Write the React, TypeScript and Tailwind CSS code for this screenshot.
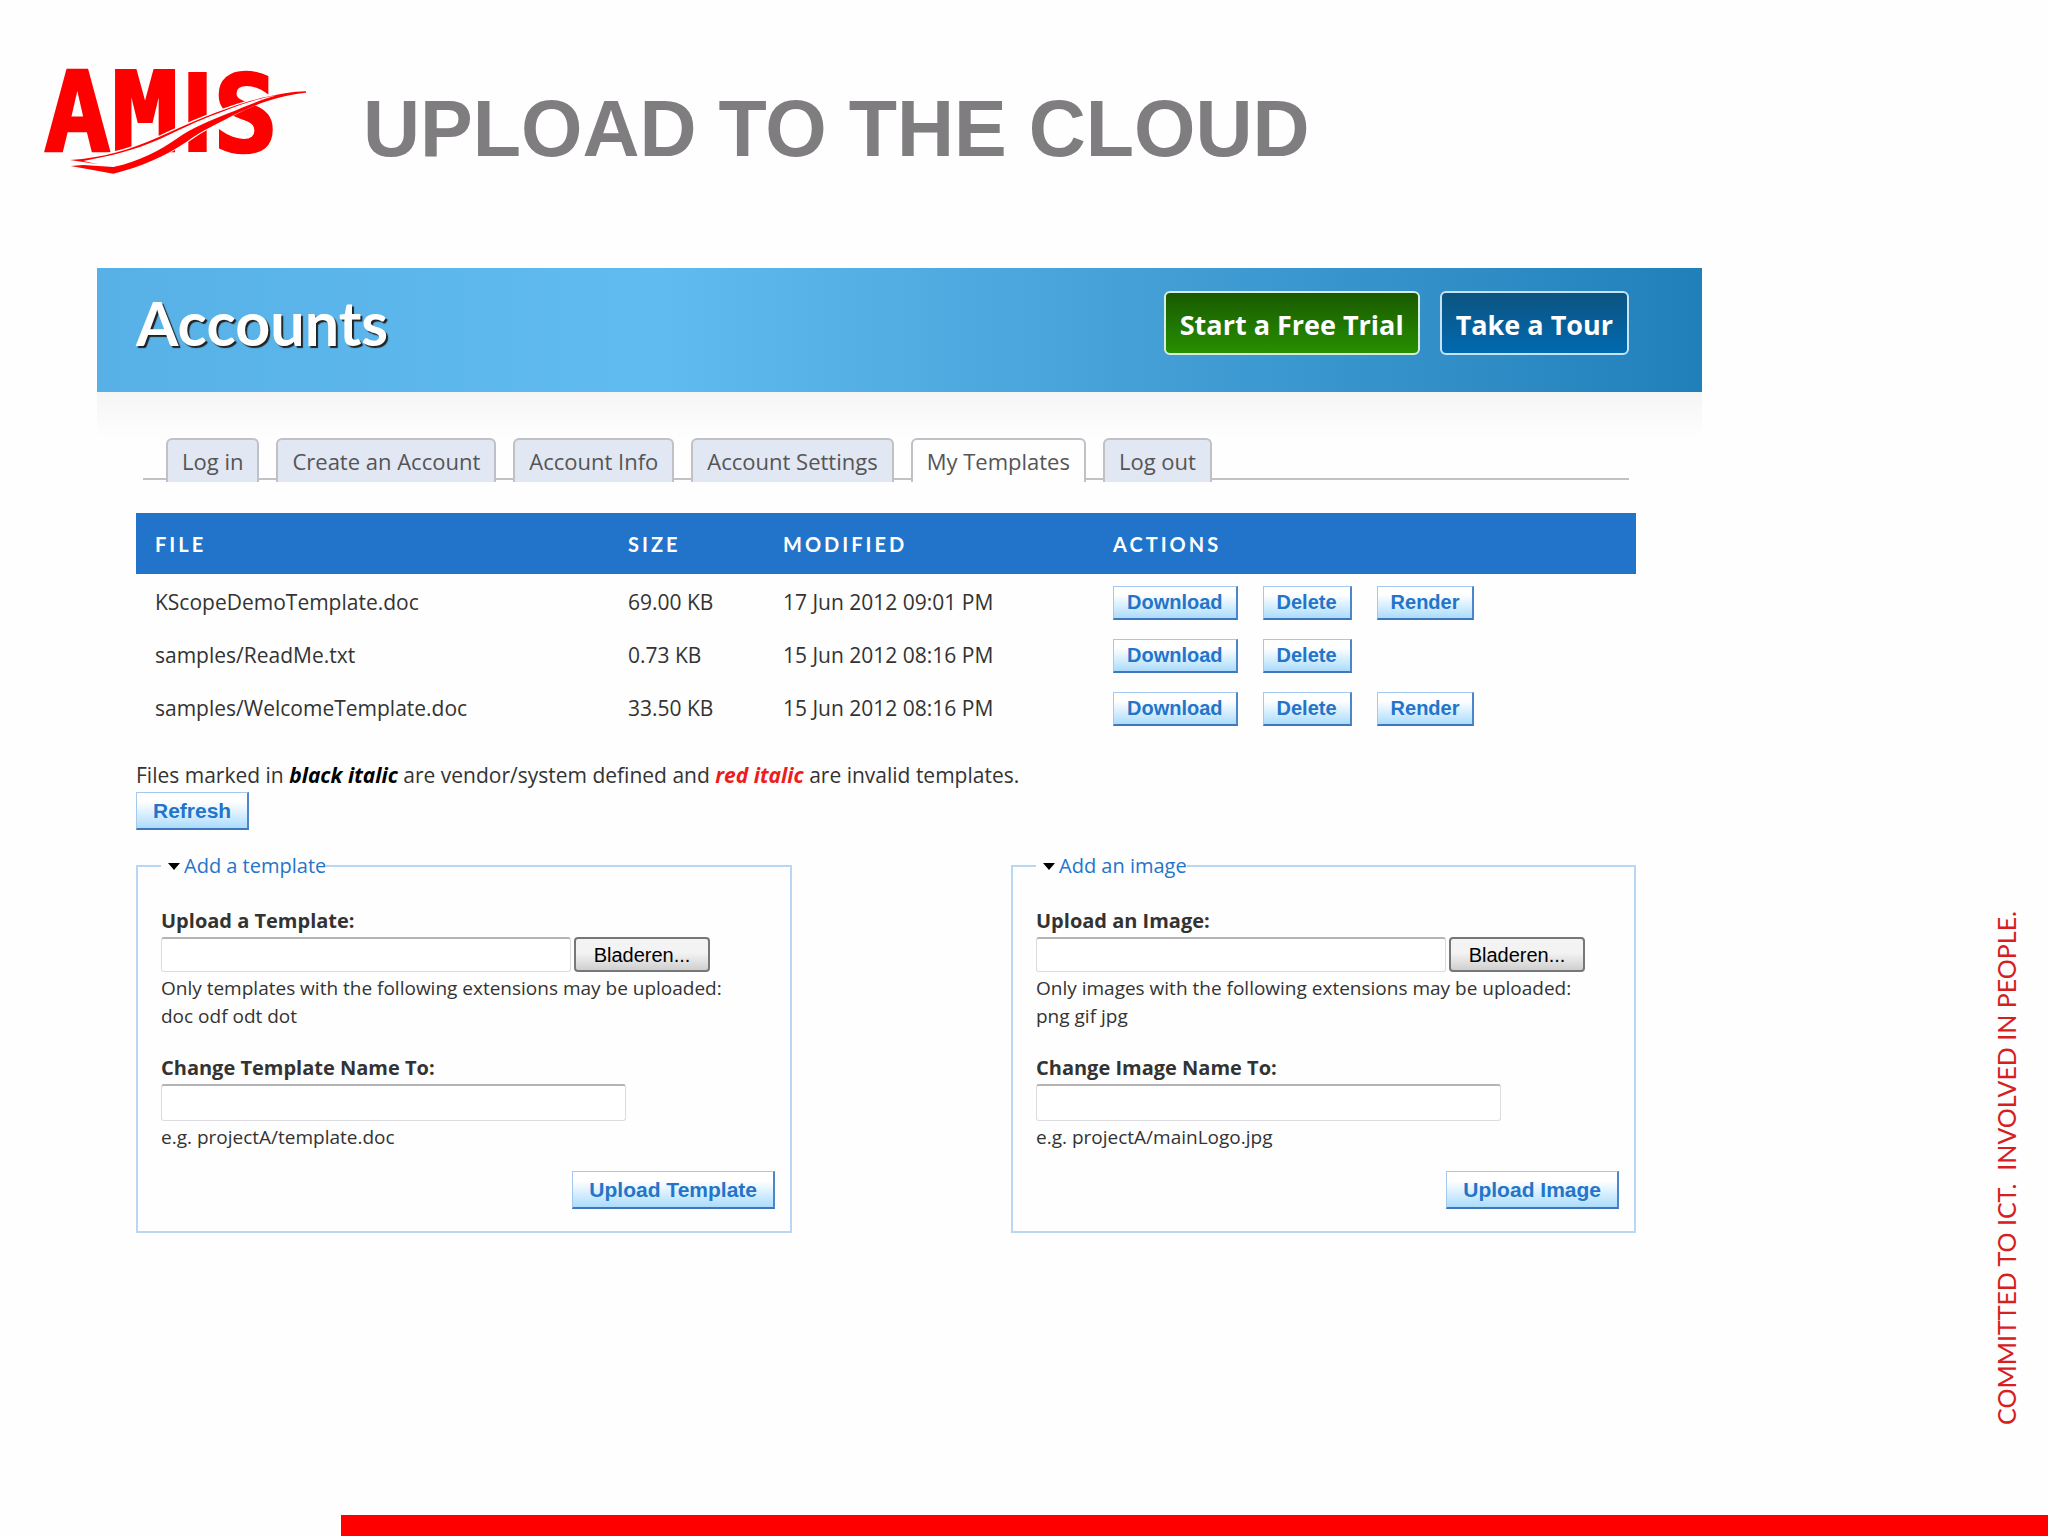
import { clsx } from "clsx";

const tabs = ["Log in", "Create an Account", "Account Info", "Account Settings", "My Templates", "Log out"];

const files = [
  { name: "KScopeDemoTemplate.doc", size: "69.00 KB", modified: "17 Jun 2012 09:01 PM", actions: ["Download", "Delete", "Render"] },
  { name: "samples/ReadMe.txt", size: "0.73 KB", modified: "15 Jun 2012 08:16 PM", actions: ["Download", "Delete"] },
  { name: "samples/WelcomeTemplate.doc", size: "33.50 KB", modified: "15 Jun 2012 08:16 PM", actions: ["Download", "Delete", "Render"] },
];

function Logo() {
  return (
    <svg viewBox="0 0 900 420" className="h-[140px] w-[300px] shrink-0 overflow-visible" role="img" aria-label="AMIS">
      <g fill="#ff0000" fontWeight="700">
        <text y="304" x="42 245" fontSize="332" stroke="#ff0000" strokeWidth="8" fontFamily="'DejaVu Sans Mono', monospace">
          AM
        </text>
        <text y="304" x="455" fontSize="340" stroke="#ff0000" strokeWidth="6" fontFamily="'Liberation Sans', sans-serif">
          I
        </text>
        <text y="304" x="550" fontSize="322" stroke="#ff0000" strokeWidth="8" fontFamily="'DejaVu Sans Mono', monospace">
          S
        </text>
      </g>
      <path
        fill="#fff"
        d="M100 326 C200 322 290 300 385 258 C480 214 560 178 660 150 C730 132 790 122 834 122 L834 130 C770 134 700 152 620 192 C560 224 520 244 475 276 C430 304 390 326 340 348 L250 378 L100 352 Z"
      />
      <path
        fill="#ff0000"
        d="M120 330 C220 324 300 300 385 262 C480 218 570 180 660 153 C730 134 790 124 828 124 L828 128 C760 134 690 156 610 196 C555 226 515 242 470 275 C410 316 330 352 250 371 L122 348 L160 345 L250 351 C330 334 390 300 440 266 C490 232 540 212 595 190 C640 172 690 150 740 136 C690 144 640 160 590 180 C520 206 470 228 390 267 C310 302 240 318 160 333 L205 343 Z"
      />
    </svg>
  );
}

function BlueButton({ label, small = false }: { label: string; small?: boolean }) {
  return (
    <button
      type="button"
      className={clsx(
        "border border-r-2 border-b-2 border-t-[#a5c8ee] border-r-[#4b86cb] border-b-[#3f77bd] border-l-[#a5c8ee] bg-linear-to-b from-white from-25% to-[#abdcfb] font-['Liberation_Sans',sans-serif] leading-6 font-bold text-[#2474c9]",
        small ? "h-[34px] px-[13px] text-xl" : "h-[38px] px-4 text-[21px]",
      )}
    >
      {label}
    </button>
  );
}

type UploadFormProps = {
  id: string;
  title: string;
  uploadLabel: string;
  uploadHint: string;
  extensions: string;
  nameLabel: string;
  nameHint: string;
  submit: string;
  className: string;
};

function UploadForm({ id, title, uploadLabel, uploadHint, extensions, nameLabel, nameHint, submit, className }: UploadFormProps) {
  const field =
    "rounded-[3px] border border-[#dcdce0] border-t-2 border-t-[#b4b4b6] bg-white px-2 text-xl";

  return (
    <fieldset className={clsx("border-2 border-[#b9d6f2] px-[23px] pb-[22px]", className)}>
      <legend className="flex h-7 items-center gap-1 pl-[7px] text-xl text-[#2474c9]">
        <span className="size-0 border-x-[6px] border-t-[7px] border-x-transparent border-t-black" />
        <a href={`#${id}`}>{title}</a>
      </legend>
      <div className="pt-[25px]">
        <label htmlFor={`${id}-file`} className="block text-xl leading-8 font-bold">
          {uploadLabel}
        </label>
        <div className="flex gap-[3px]">
          <input id={`${id}-file`} type="text" className={clsx(field, "h-[35px] w-[410px]")} />
          <button
            type="button"
            className="h-[35px] w-[136px] rounded-[4px] border-2 border-[#77777a] bg-linear-to-b from-[#f3f3f3] from-45% to-[#cfcfcf] font-['Liberation_Sans',sans-serif] text-xl text-black"
          >
            Bladeren...
          </button>
        </div>
        <p className="pt-0.5 text-[19px] leading-7">
          {uploadHint}
          <br />
          {extensions}
        </p>
      </div>
      <div className="pt-[22px]">
        <label htmlFor={`${id}-name`} className="block text-xl leading-8 font-bold">
          {nameLabel}
        </label>
        <input id={`${id}-name`} type="text" className={clsx(field, "block h-[37px] w-[465px]")} />
        <p className="pt-0.5 text-[19px] leading-7">{nameHint}</p>
      </div>
      <div className="-mr-2 flex justify-end pt-5">
        <BlueButton label={submit} />
      </div>
    </fieldset>
  );
}

export default function App() {
  return (
    <div className="flex min-h-screen flex-col bg-[#fefefe] font-['Open_Sans','Noto_Sans',sans-serif] text-[#333]">
      <header className="flex items-center gap-[33px] pt-[50px] pl-[30px]">
        <Logo />
        <h1 className="pt-4 font-['Liberation_Sans',sans-serif] text-[79px] leading-none font-bold text-[#7f7d7f]">
          UPLOAD TO THE CLOUD
        </h1>
      </header>

      <div className="flex flex-1 pt-[78px] pl-[97px]">
        <main className="flex-1">
          <div className="flex h-[124px] items-start justify-between bg-linear-to-r from-[#57b1e6] via-[#60bbf0] via-35% to-[#2080ba] pt-[23px] pr-[73px] pl-[39px]">
            <h2 className="font-[Lato,sans-serif] text-[61px] leading-[64px] font-bold text-white [text-shadow:2px_2px_1px_#222]">
              Accounts
            </h2>
            <div className="flex gap-5 text-[27px] font-bold text-white">
              <a href="#trial" className="flex h-16 items-center rounded-md border-2 border-[#d8eedd] bg-linear-to-b from-[#195a00] to-[#279000] px-[14px] pt-1">
                Start a Free Trial
              </a>
              <a href="#tour" className="flex h-16 items-center rounded-md border-2 border-[#c4e4f6] bg-linear-to-b from-[#0c5480] to-[#0069b0] px-[14px] pt-1">
                Take a Tour
              </a>
            </div>
          </div>
          <div className="h-[46px] bg-linear-to-b from-[#f5f5f6] to-[#fefefe]" />

          <div className="pr-[66px] pl-[39px]">
            <nav className="relative mr-[7px] ml-[7px] flex h-11 gap-[17px] pl-[23px] text-[22px] text-[#555]">
              <div className="absolute inset-x-0 bottom-[2px] h-0.5 bg-[#c2c2c4]" />
              {tabs.map((tab) => (
                <a
                  key={tab}
                  href="#tabs"
                  className={clsx(
                    "relative flex items-center rounded-t-md border-2 border-b-0 border-[#c0c1c6] px-[14px] whitespace-nowrap",
                    tab === "My Templates" ? "bg-[#fefefe]" : "bg-[#e1e7f3]",
                  )}
                >
                  {tab}
                </a>
              ))}
            </nav>

            <table className="mt-[31px] w-full table-fixed text-left text-[21px]">
              <colgroup>
                <col className="w-[473px]" />
                <col className="w-[155px]" />
                <col className="w-[330px]" />
                <col />
              </colgroup>
              <thead className="bg-[#2174c9] font-[Lato,sans-serif] text-xl tracking-[3px] text-white">
                <tr className="h-[61px]">
                  {["FILE", "SIZE", "MODIFIED", "ACTIONS"].map((heading) => (
                    <th key={heading} className="px-[19px] font-bold">
                      {heading}
                    </th>
                  ))}
                </tr>
              </thead>
              <tbody>
                {files.map((file) => (
                  <tr key={file.name} className="h-[53px]">
                    <td className="pt-1 pl-[19px]">{file.name}</td>
                    <td className="pt-1 pl-[19px]">{file.size}</td>
                    <td className="pt-1 pl-[19px]">{file.modified}</td>
                    <td className="pt-1 pl-[19px]">
                      <div className="flex gap-[25px]">
                        {file.actions.map((action) => (
                          <BlueButton key={action} label={action} small />
                        ))}
                      </div>
                    </td>
                  </tr>
                ))}
              </tbody>
            </table>

            <p className="mt-[26px] mb-px text-[21px] leading-8">
              Files marked in <em className="font-bold text-black">black italic</em> are vendor/system defined and{" "}
              <em className="font-bold text-[#ee1c1c]">red italic</em> are invalid templates.
            </p>
            <BlueButton label="Refresh" />

            <div className="flex items-start justify-between pt-[22px]">
              <UploadForm
                id="template"
                title="Add a template"
                uploadLabel="Upload a Template:"
                uploadHint="Only templates with the following extensions may be uploaded:"
                extensions="doc odf odt dot"
                nameLabel="Change Template Name To:"
                nameHint="e.g. projectA/template.doc"
                submit="Upload Template"
                className="w-[656px]"
              />
              <UploadForm
                id="image"
                title="Add an image"
                uploadLabel="Upload an Image:"
                uploadHint="Only images with the following extensions may be uploaded:"
                extensions="png gif jpg"
                nameLabel="Change Image Name To:"
                nameHint="e.g. projectA/mainLogo.jpg"
                submit="Upload Image"
                className="w-[625px]"
              />
            </div>
          </div>
        </main>

        <aside className="flex w-[346px] items-end justify-end pr-[26px] pb-[90px]">
          <p className="rotate-180 font-[Lato,sans-serif] text-[25px] leading-8 whitespace-pre text-[#d5201f] [writing-mode:vertical-rl]">
            COMMITTED TO ICT.  INVOLVED IN PEOPLE.
          </p>
        </aside>
      </div>

      <div className="ml-auto h-[21px] w-5/6 bg-[#ff0000]" />
    </div>
  );
}
